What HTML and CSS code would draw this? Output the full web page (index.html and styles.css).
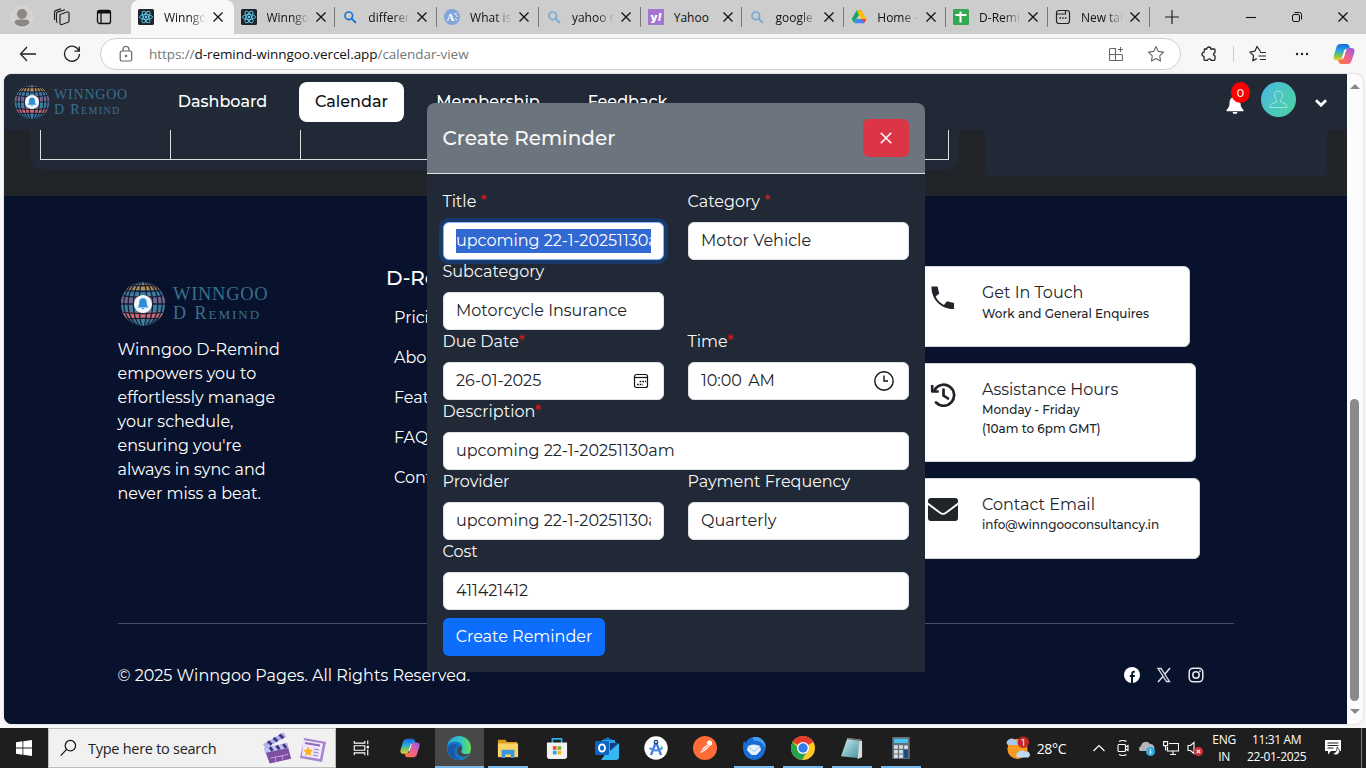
FILE: index.html
```html
<!DOCTYPE html>
<html lang="en">
<head>
<meta charset="utf-8">
<title>Winngoo D-Remind</title>
<link rel="stylesheet" href="styles.css">
</head>
<body>
<svg class="defs" width="0" height="0" aria-hidden="true">
  <defs>
    <linearGradient id="gCopA" x1="0" y1="0" x2="0" y2="1"><stop offset="0" stop-color="#1668d8"/><stop offset=".4" stop-color="#25a7e8"/><stop offset=".7" stop-color="#79c35a"/><stop offset="1" stop-color="#f4d12d"/></linearGradient>
    <linearGradient id="gCopB" x1="1" y1="0" x2="0" y2="1"><stop offset="0" stop-color="#8a5cf0"/><stop offset=".5" stop-color="#f0618f"/><stop offset="1" stop-color="#ff7a2e"/></linearGradient>
    <linearGradient id="gAv" x1="0" y1="0" x2="1" y2=".6"><stop offset="0" stop-color="#4bb8e0"/><stop offset="1" stop-color="#4bd0a8"/></linearGradient>
    <linearGradient id="gEdge" x1="0" y1="0" x2="1" y2="0"><stop offset="0" stop-color="#2aa5e0"/><stop offset=".6" stop-color="#32c7c0"/><stop offset="1" stop-color="#6be04e"/></linearGradient>
    <linearGradient id="gNote" x1="0" y1="0" x2="1" y2="1"><stop offset="0" stop-color="#d3eef2"/><stop offset="1" stop-color="#3e8f9e"/></linearGradient>
    <clipPath id="globeClip"><circle cx="24" cy="24" r="23"/></clipPath>
  </defs>
  <symbol id="x" viewBox="0 0 12 12"><path d="M1.500 1.500l9 9M10.500 1.500l-9 9" fill="none" stroke="currentColor" stroke-width="1.300"/></symbol>
  <symbol id="react" viewBox="0 0 16 16"><rect width="16" height="16" rx="1.500" fill="#20232a"/><g fill="none" stroke="#5ccfee" stroke-width=".9"><ellipse cx="8" cy="8" rx="6.500" ry="2.500"/><ellipse cx="8" cy="8" rx="6.500" ry="2.500" transform="rotate(60 8 8)"/><ellipse cx="8" cy="8" rx="6.500" ry="2.500" transform="rotate(120 8 8)"/></g><circle cx="8" cy="8" r="1.300" fill="#5ccfee"/></symbol>
  <symbol id="mag" viewBox="0 0 16 16"><circle cx="6.800" cy="6.800" r="3.800" fill="none" stroke="currentColor" stroke-width="1.700"/><path d="M9.600 9.600l3.700 3.700" stroke="currentColor" stroke-width="2" stroke-linecap="round"/></symbol>
  <symbol id="copilot" viewBox="0 0 24 24"><path d="M8.500 2h6c1.700 0 2.500 1 3 2.500l.6 2.200h-2.600c-2 0-3 1-3.600 3l-1.700 6c-.5 1.600-1.300 2.600-3 2.600H4.500C2 18.300 1 16.500 1.700 14L4.500 5C5.200 3 6.500 2 8.500 2z" fill="url(#gCopA)"/><path d="M15.500 22h-6c-1.700 0-2.500-1-3-2.500l-.5-1.800h2.500c2 0 3-1 3.600-3l1.700-6c.5-1.600 1.300-2.600 3-2.600h2.700c2.500 0 3.500 1.800 2.800 4.300l-2.800 8.600c-.7 2-2 3-4 3z" fill="url(#gCopB)"/><path d="M10.500 14.500l1.900-6c.3-.9.900-1.500 1.800-1.500l-2.200 7.500c-.3.900-.9 1.600-1.900 1.600z" fill="#fff"/></symbol>
  <symbol id="globe" viewBox="0 0 48 48">
    <g clip-path="url(#globeClip)">
      <rect width="48" height="48" fill="#417f9f"/><rect y="3" width="48" height="6.500" fill="#b98a4c"/><rect y="15.500" width="48" height="8.500" fill="#75678b"/><rect y="32" width="48" height="8" fill="#c96a6e"/>
      <g fill="none" stroke="#14203a" stroke-width="1.400">
        <path d="M0 3.500q24 3 48 0M0 9q24 4 48 0M0 15q24 4 48 0M0 24h48M0 32.500q24 3 48 0M0 40q24 -2 48 0"/>
        <ellipse cx="24" cy="24" rx="4" ry="24"/><ellipse cx="24" cy="24" rx="10" ry="24"/><ellipse cx="24" cy="24" rx="15.500" ry="24"/><ellipse cx="24" cy="24" rx="20" ry="24"/>
      </g>
    </g>
    <circle cx="24" cy="24" r="9.500" fill="#f4f4fb"/><path d="M24 18c-3 0-4 2.200-4 5 0 2.500-.7 3.500-1.700 4.600h11.400C28.700 26.500 28 25.500 28 23c0-2.800-1-5-4-5zM22.500 28.300h3c-.3 1.500-2.700 1.500-3 0z" fill="#2f8fd6"/>
  </symbol>
</svg>

<header class="tabstrip">
  <div class="left-tools">
    <svg class="profile" viewBox="0 0 22 22"><circle cx="11" cy="11" r="10.500" fill="#d4d1cd" stroke="#dedbd7"/><circle cx="11" cy="8" r="5" fill="#8b8987"/><path d="M3.500 17c0-2.500 2-3.500 4-3.500h7c2 0 4 1 4 3.500-2 2.400-4.500 3.600-7.500 3.600S5.500 19.400 3.500 17z" fill="#8b8987"/></svg>
    <svg class="ic18" viewBox="0 0 18 18" fill="none" stroke="#222" stroke-width="1.200" stroke-linejoin="round"><path d="M7 6.500l7-2.500q2-.5 2 1.500v7.500q0 1-1 1.300l-6 2.200q-2 .5-2-1.500zM4.500 14.500q-1 0-1-1.500V5.500q0-1 1-1.400L12 1.800M1.500 12V4q0-1 1-1.400L8 .9"/></svg>
    <svg class="ic18" viewBox="0 0 18 18" fill="none" stroke="#111" stroke-width="1.300"><rect x="2.500" y="2.500" width="13" height="13" rx="2"/><path d="M2.500 4h13" stroke-width="3"/><path d="M6 5v10"/></svg>
  </div>
  <div class="tabs">
    <div class="tab active"><svg class="fav"><use href="#react"/></svg><span class="tt">Winngoo</span><svg class="cl"><use href="#x"/></svg></div>
    <div class="tab"><svg class="fav"><use href="#react"/></svg><span class="tt">Winngoo</span><svg class="cl"><use href="#x"/></svg></div>
    <div class="tab"><svg class="fav blue"><use href="#mag"/></svg><span class="tt">different</span><svg class="cl"><use href="#x"/></svg></div>
    <div class="tab"><svg class="fav" viewBox="0 0 16 16"><circle cx="8" cy="8" r="8" fill="#81a5da"/><text x="2.500" y="12" class="fav-a">A</text><path d="M10.500 4l1 2M12 7h2M11 9.500l2 1.500M12.500 4l-1 1.500" stroke="#fff" stroke-width=".9"/></svg><span class="tt">What is a</span><svg class="cl"><use href="#x"/></svg></div>
    <div class="tab"><svg class="fav pale"><use href="#mag"/></svg><span class="tt">yahoo ma</span><svg class="cl"><use href="#x"/></svg></div>
    <div class="tab"><svg class="fav" viewBox="0 0 16 16"><rect width="16" height="16" fill="#a374d0"/><text x="2.500" y="11.500" class="fav-y">y<tspan font-style="italic">!</tspan></text></svg><span class="tt nofade">Yahoo</span><svg class="cl"><use href="#x"/></svg></div>
    <div class="tab"><svg class="fav pale"><use href="#mag"/></svg><span class="tt">google</span><svg class="cl"><use href="#x"/></svg></div>
    <div class="tab"><svg class="fav" viewBox="0 0 16 16"><path d="M5.500 1.500h5L8 5.800 3.200 14 .7 10z" fill="#1fa463"/><path d="M5.500 1.500h5l4.900 8.500h-5z" fill="#fbbc04"/><path d="M3.200 14.200L5.700 10h9.700L13 14.200z" fill="#4285f4"/><path d="M13 14.200l2.400-4.200h-4.800z" fill="#ea4335"/></svg><span class="tt">Home -</span><svg class="cl"><use href="#x"/></svg></div>
    <div class="tab"><svg class="fav" viewBox="0 0 16 16"><rect width="16" height="16" rx="1.500" fill="#34a853"/><path d="M7.500 2.500v11M2.500 6h11" stroke="#fff" stroke-width="2"/></svg><span class="tt">D-Remin</span><svg class="cl"><use href="#x"/></svg></div>
    <div class="tab"><svg class="fav" viewBox="0 0 16 16" fill="none" stroke="#222" stroke-width="1.200"><rect x="1.500" y="1.500" width="13" height="13" rx="2.500"/><path d="M1.500 5h9V2"/><path d="M4.500 9h7" stroke-width="1.500" stroke-dasharray="1.500 1.200"/></svg><span class="tt">New tab</span><svg class="cl"><use href="#x"/></svg></div>
  </div>
  <svg class="newtab" viewBox="0 0 14 14" stroke="#222" stroke-width="1.200"><path d="M7 0v14M0 7h14"/></svg>
  <div class="winbtns">
    <svg viewBox="0 0 12 12" stroke="#111" stroke-width="1.100"><path d="M1 6.500h10"/></svg>
    <svg viewBox="0 0 12 12" fill="none" stroke="#111"><rect x="1.500" y="3.500" width="7" height="7" rx="1.500"/><path d="M3.500 1.500h5q2 0 2 2v5"/></svg>
    <svg viewBox="0 0 12 12"><use href="#x"/></svg>
  </div>
</header>

<div class="toolbar">
  <svg class="back" viewBox="0 0 18 16" fill="none" stroke="#222" stroke-width="1.300"><path d="M17 8H1.500M8 1L1.500 8 8 15"/></svg>
  <svg class="reload" viewBox="0 0 18 18" fill="none" stroke="#222" stroke-width="1.300"><path d="M16 6A7.500 7.500 0 1 0 16.500 9M16.300 1.500V6.200H11.500"/></svg>
  <div class="address">
    <svg class="lock" viewBox="0 0 14 16" fill="none" stroke="#666" stroke-width="1.200"><rect x="1.200" y="5" width="11.500" height="10" rx="1.800"/><path d="M4 5V3.500a3 3 0 0 1 6 0V5"/><circle cx="7" cy="10" r=".6" fill="#666"/></svg>
    <span class="url"><i>https://</i>d-remind-winngoo.vercel.app<i>/calendar-view</i></span>
    <svg class="apps" viewBox="0 0 16 16" fill="none" stroke="#666" stroke-width="1.100"><path d="M7.500 14.500h-5a1 1 0 0 1-1-1v-10a1 1 0 0 1 1-1h5zM1.500 8.500h12a1 1 0 0 1 1 1v4a1 1 0 0 1-1 1h-6M12.500 1v5M10 3.500h5"/></svg>
    <svg class="star" viewBox="0 0 18 18" fill="none" stroke="#666" stroke-width="1.100" stroke-linejoin="round"><path d="M9 1.500l2.300 4.900 5.200.7-3.800 3.700.9 5.300L9 13.500l-4.600 2.600.9-5.300L1.500 7.100l5.200-.7z"/></svg>
  </div>
  <svg class="puzzle" viewBox="0 0 18 18" fill="none" stroke="#222" stroke-width="1.300" stroke-linejoin="round"><path d="M4.500 4h2.300a2 2 0 1 1 4 0H14q1 0 1 1v2.800a1.500 1.500 0 1 0 0 3V14q0 1.300-1 1.300h-2.800a1.900 1.900 0 0 0-3.700 0H5q-1 0-1-1v-3a2 2 0 1 1 0-4z"/></svg>
  <i class="vsep"></i>
  <svg class="favs" viewBox="0 0 18 18" fill="none" stroke="#222" stroke-width="1.200" stroke-linejoin="round"><path d="M11.500 6.500L8 1.500 5.900 6.200l-5 .8 3.700 3.600-.8 5.200 4-2.200M11 7.500h6M9.500 11h7.500M11 14.500h6"/></svg>
  <svg class="dots" viewBox="0 0 14 4" fill="#222"><circle cx="2" cy="2" r="1.200"/><circle cx="7" cy="2" r="1.200"/><circle cx="12" cy="2" r="1.200"/></svg>
  <svg class="cop"><use href="#copilot"/></svg>
</div>

<div class="viewport">
  <main class="page">
    <nav class="nav">
      <div class="logo small"><svg><use href="#globe"/></svg><div class="lt"><b>WINNGOO</b><b class="sc">D Remind</b></div></div>
      <a class="n1">Dashboard</a><a class="n2">Calendar</a><a class="n3">Membership</a><a class="n4">Feedback</a>
      <div class="nav-right">
        <div class="bell"><svg viewBox="0 0 18 18" fill="#fff"><path d="M9 0C5 1 3.500 4 3.500 7.500 3.500 11 2 12 .5 14v1.300h17V14C16 12 14.500 11 14.500 7.500 14.500 4 13 1 9 0zM6.500 16h5a2.500 2 0 0 1-5 0z"/></svg><span class="badge">0</span></div>
        <svg class="avatar" viewBox="0 0 35 35"><circle cx="17.500" cy="17.500" r="17.500" fill="url(#gAv)"/><path d="M17.500 9c-3 0-4.500 2.200-4 5 .3 2 1 3.200 2 4v2l-5 2c-1 .5-1.500 1.500-1.500 3.500h17c0-2-.5-3-1.500-3.500l-5-2v-2c1-.8 1.700-2 2-4 .5-2.800-1-5-4-5z" fill="none" stroke="#9be8df" stroke-width="1"/></svg>
        <svg class="chev" viewBox="0 0 12 8" fill="none" stroke="#fff" stroke-width="2.800"><path d="M1 1.200l5 5 5-5"/></svg>
      </div>
    </nav>
    <section class="cal">
      <div class="calcard"><div class="grid"><i></i><i></i><i></i><i></i><i></i><i></i><i></i></div></div>
      <div class="side"></div>
    </section>
    <footer class="footer">
      <div class="ftop">
        <div class="about">
          <div class="logo big"><svg><use href="#globe"/></svg><div class="lt"><b>WINNGOO</b><b class="sc">D Remind</b></div></div>
          <p>Winngoo D-Remind<br>empowers you to<br>effortlessly manage<br>your schedule,<br>ensuring you're<br>always in sync and<br>never miss a beat.</p>
        </div>
        <div class="links"><h5>D-Remind</h5><a>Pricing</a><a>About Us</a><a>Features</a><a>FAQ's</a><a>Contact Us</a></div>
        <div class="contacts">
          <div class="cc c1"><svg viewBox="0 0 24 24" fill="#212529"><path d="M.5.500h6.200l1.700 7.200-3.700 3.100c2 4 4.500 6.500 8.500 8.500l3.100-3.700 7.200 1.700v6.200C10 24 0 13 .5.500z" transform="scale(.98)"/></svg><div><h6>Get In Touch</h6><p>Work and General Enquires</p></div></div>
          <div class="cc c2"><svg viewBox="0 0 26 24" fill="none" stroke="#212529" stroke-width="2.700"><path d="M4.500 7A10.500 10.500 0 1 1 6 19.500" stroke-linecap="round"/><path d="M2.200 2v6.500h6.500" stroke-linejoin="round" stroke-width="2.600"/><path d="M13.500 6.500v6l4.500 3" stroke-linecap="round"/></svg><div><h6>Assistance Hours</h6><p>Monday - Friday<br>(10am to 6pm GMT)</p></div></div>
          <div class="cc c3"><svg viewBox="0 0 30 23" fill="#212529"><path d="M3 0h24a3 3 0 0 1 3 3v1.500L17.500 14a4 4 0 0 1-5 0L0 4.500V3a3 3 0 0 1 3-3z"/><path d="M0 7l11.500 8.500a6 6 0 0 0 7 0L30 7v13a3 3 0 0 1-3 3H3a3 3 0 0 1-3-3z"/></svg><div><h6>Contact Email</h6><p>info@winngooconsultancy.in</p></div></div>
        </div>
      </div>
      <div class="fbot">
        <span>© 2025 Winngoo Pages. All Rights Reserved.</span>
        <div class="social">
          <svg viewBox="0 0 16 16"><circle cx="8" cy="8" r="8" fill="#fff"/><path d="M8 16V8.800M5.800 9h5M8.200 10V6.500q0-2 2.600-1.700" fill="none" stroke="#09122c" stroke-width="1.900"/></svg>
          <svg viewBox="0 0 16 16" fill="none" stroke="#dfe2e8"><path d="M2 1.500h3l8.500 13h-3z" stroke-width="1.300"/><path d="M14 1L9 7M7 9.500L2 15" stroke-width="1.500"/></svg>
          <svg viewBox="0 0 16 16" fill="none" stroke="#e8e8ee" stroke-width="1.500"><rect x="1.200" y="1.200" width="13.600" height="13.600" rx="4"/><circle cx="8" cy="8" r="3.200"/><circle cx="12" cy="4.200" r=".3"/></svg>
        </div>
      </div>
    </footer>

    <div class="modal">
      <div class="mh"><h4>Create Reminder</h4><span class="mx"><svg><use href="#x"/></svg></span></div>
      <div class="mb">
        <div class="f"><label>Title <em>*</em></label><div class="in focus"><span class="sel">upcoming 22-1-20251130am</span></div></div>
        <div class="f"><label>Category <em>*</em></label><div class="in"><span>Motor Vehicle</span></div></div>
        <div class="f"><label>Subcategory</label><div class="in"><span>Motorcycle Insurance</span></div></div>
        <div class="f"></div>
        <div class="f"><label>Due Date<em>*</em></label><div class="in"><span>26-01-2025</span><svg class="icd" viewBox="0 0 16 16" fill="none" stroke="#111" stroke-width="1.200"><rect x="1.500" y="1.500" width="13" height="13" rx="2"/><path d="M1.500 4.500h13"/><path d="M6.600 8.500h6.500M4 11.500h6" stroke-width="1.700" stroke-dasharray="1.700 1"/></svg></div></div>
        <div class="f"><label>Time<em>*</em></label><div class="in"><span class="time">10:00 AM</span><svg class="ict" viewBox="0 0 20 20" fill="none" stroke="#111" stroke-width="1.400"><circle cx="10" cy="10" r="9.200"/><path d="M10 4.500V10h4"/></svg></div></div>
        <div class="f wide"><label>Description<em>*</em></label><div class="in"><span>upcoming 22-1-20251130am</span></div></div>
        <div class="f"><label>Provider</label><div class="in"><span>upcoming 22-1-20251130am</span></div></div>
        <div class="f"><label>Payment Frequency</label><div class="in"><span>Quarterly</span></div></div>
        <div class="f wide"><label>Cost</label><div class="in"><span>411421412</span></div></div>
        <div class="btn">Create Reminder</div>
      </div>
    </div>
  </main>
  <div class="scroll"><i class="up"></i><i class="thumb"></i><i class="down"></i></div>
</div>

<div class="taskbar">
  <div class="start"><svg viewBox="0 0 16 16" fill="#fff"><path d="M0 2.200l6.500-.9v6.300H0zM7.300 1.200L16 0v7.600H7.300zM0 8.400h6.500v6.300L0 13.800zM7.300 8.400H16V16l-8.700-1.200z"/></svg></div>
  <div class="search">
    <svg class="sm" viewBox="0 0 18 18" fill="none" stroke="#111" stroke-width="1.300"><circle cx="11" cy="6.500" r="5.500"/><path d="M7 10.500L.8 17"/></svg>
    <span>Type here to search</span>
    <svg class="clap" viewBox="0 0 32 34"><path d="M1 13L22 1l3 4.500L4 17z" fill="#a9b3ee"/><path d="M6 10l4 3.500M12 6.500l4 3.500M18 3l4 4" stroke="#46347c" stroke-width="3"/><path d="M2 17l24-5 4 16L8 33z" fill="#7d4ea4"/><path d="M2 17l24-5 1.300 5L4 22z" fill="#bac5f6"/><path d="M8 16l3 4M15 14.500l3 4M22 13l3 4" stroke="#46347c" stroke-width="3"/><path d="M9 27.500l18-4M14 27v4M21 25v4" stroke="#d7b9eb" stroke-width=".8"/></svg>
    <svg class="news" viewBox="0 0 28 26"><path d="M5 1l22 4-4 20-22-4z" fill="#a585cb"/><path d="M4 3l20 3.500-3 15.500-18-3z" fill="#efe7fa"/><path d="M6 6l15 2.500" stroke="#8e6cbc" stroke-width="1.800"/><path d="M15 12l5 1M14.500 15l5 1M14 18l5 1" stroke="#9479ba" stroke-width="1"/><path d="M9 9.500l1.500 3 3.500.5-2.500 2.500.6 3.500L9 17.300 6 19l.6-3.500L4 13l3.500-.5z" fill="#ffb31c"/></svg>
  </div>
  <div class="apps-row">
    <div><svg viewBox="0 0 24 24" class="a18" fill="none" stroke="#fff" stroke-width="1.500"><path d="M3 2.500v3h14v-3M3 21.500v-3h14v3M3 9h14v6H3zM21 2v5M21 14v8"/><path d="M21 9v3.500" stroke-width="3"/></svg></div>
    <div><svg><use href="#copilot"/></svg></div>
    <div class="on full"><svg viewBox="0 0 24 24"><circle cx="12" cy="12" r="12" fill="url(#gEdge)"/><path d="M0 12C0 7 5 5.500 9 5.800c5 .3 7 4 6.500 7-.3 1.200-1 1.700-1 2.700 0 2 3 2.800 5 2.500 1-.2 2.300-.7 2.700-.4C20.500 21 17 24 12 24 5 24 0 19 0 12z" fill="#1674c4"/><path d="M9 11c-3 3-2 11 5 13-8 .5-13-5-13.500-11C2 8 9 7.500 11 9z" fill="#1a58a5"/><path d="M12.500 10c2 .6 2.800 2.500 1.600 4.600-.7 1.600.8 3.300 4.400 3.600 2 .1 3-.4 4-.8-2 2.800-6 3.800-9 2.600-4-1.600-5-7-1-10z" fill="#454545"/></svg></div>
    <div class="on"><svg viewBox="0 0 24 24"><path d="M1 3h8l2 2.500h11V21H1z" fill="#d99a18"/><path d="M1 7h22v15H1z" fill="#fbd367"/><path d="M5 14h14v9h-4v-4H9v4H5z" fill="#3b97dc"/></svg></div>
    <div><svg viewBox="0 0 24 24"><path d="M7 7V2h10v5" fill="none" stroke="#28b1e6" stroke-width="1.800"/><path d="M1 6h22v15a3 3 0 0 1-3 3H4a3 3 0 0 1-3-3z" fill="#f2f2f2"/><path d="M7.500 10h4v4h-4z" fill="#e8502b"/><path d="M12.500 10h4v4h-4z" fill="#7cb829"/><path d="M7.500 15h4v4h-4z" fill="#22a5ea"/><path d="M12.500 15h4v4h-4z" fill="#f8b818"/></svg></div>
    <div><svg viewBox="0 0 24 24" class="a24"><path d="M4 6l9-5 9 6v4H4z" fill="#1a64bb"/><path d="M7 4h13v14H7z" fill="#28a8ea"/><path d="M15 12l9-5v14a3 3 0 0 1-3 3H6z" fill="#35b8f1"/><path d="M24 7l-9 8v-8z" fill="#123f82"/><rect y="5" width="14" height="14" rx="1" fill="#0c65c3"/><ellipse cx="7" cy="12" rx="3" ry="3.600" fill="none" stroke="#fff" stroke-width="1.900"/></svg></div>
    <div><svg viewBox="0 0 24 24" class="a24"><circle cx="12" cy="12" r="11.700" fill="#fff"/><path d="M12 6L7 19M12 6l5 13" stroke="#4079dc" stroke-width="2.200"/><path d="M5.500 12q6.500 5 13 0" fill="none" stroke="#4b86e8" stroke-width="2"/><circle cx="12" cy="6" r="1.700" fill="#fff" stroke="#174179" stroke-width="1.300"/><path d="M16.500 9l2.500 2.500-2 1.500" fill="#3ddc84"/></svg></div>
    <div><svg viewBox="0 0 24 24" class="a24"><circle cx="12" cy="12" r="12" fill="#ff6c37"/><path d="M6 19l4-7 5-4 2 1.800-5 5-5 2.500" fill="#fff"/><circle cx="16.500" cy="7" r="2.600" fill="#fff"/><path d="M9 15l7-6" stroke="#ff6c37" stroke-width=".8"/></svg></div>
    <div class="on"><svg viewBox="0 0 24 24" class="a24"><path d="M2 5l2 2C5 3 9 1 13 1c6 0 10 4 11 8 0 8-4 14-11 15C5 24 1 18 1 12c0-3 0-5 1-7z" fill="#196dd4"/><path d="M10 2c6-3 14 2 13 10-2-5-6-8-12-7 2-1 1-2-1-3z" fill="#4aa0ef"/><path d="M6 10q6-3 12 0l1 4-4 4.500q-3 1-6 0L5 14z" fill="#e7f4fe"/><path d="M6 10.500l6 5 6-5" fill="none" stroke="#91bee7"/></svg></div>
    <div class="on"><svg viewBox="0 0 24 24" class="a24"><circle cx="12" cy="12" r="12" fill="#ffca28"/><path d="M12 12L1.600 6A12 12 0 0 1 22.400 6z" fill="#e33b2e"/><path d="M1.600 6A12 12 0 0 0 11 24l6-10-9-1z" fill="#25a351"/><circle cx="12" cy="12" r="6" fill="#fff"/><circle cx="12" cy="12" r="4.700" fill="#327be9"/></svg></div>
    <div class="on"><svg viewBox="0 0 24 24"><path d="M7 1l15 2-4 20-18-2z" fill="url(#gNote)"/><path d="M20 4h3v18l-5 2z" fill="#dadada"/><path d="M7 1l15 2-.3 1.500L6.500 2.500z" fill="#777"/></svg></div>
    <div class="on"><svg viewBox="0 0 24 24"><rect x="2.500" y="0" width="19" height="24" fill="#667078"/><rect x="4.500" y="2" width="15" height="4.500" fill="#46c5f3"/><path d="M4.500 11h10M4.500 16h10M4.500 21h10" stroke="#dce2e7" stroke-width="3.800" stroke-dasharray="4 1.500"/><path d="M15.500 9.200h4v3.800h-4z" fill="#dce2e7"/><path d="M15.500 14h4v9h-4z" fill="#12488b"/></svg></div>
  </div>
  <div class="weather"><svg viewBox="0 0 26 24"><circle cx="13" cy="13" r="10.500" fill="#f79a21"/><path d="M3 9a3 3 0 0 1 0-5 5 5 0 0 1 8 0 3 3 0 0 1 2 5z" fill="#a8c8f1"/><path d="M13 22a3 3 0 0 1 0-5 5 5 0 0 1 8-1 3 3 0 0 1 3 6z" fill="#bed8f6"/><circle cx="19" cy="6" r="6" fill="#c62828"/><text x="17" y="9.500" class="wb">1</text></svg><span>28°C</span></div>
  <div class="tray">
    <svg viewBox="0 0 16 16" fill="none" stroke="#fff" stroke-width="1.200"><path d="M2.500 11L8 5.500l5.500 5.500"/></svg>
    <svg viewBox="0 0 16 16" fill="none" stroke="#fff" stroke-width="1.100"><rect x="3" y="4.500" width="7.500" height="7" rx="1"/><path d="M10.500 7l2.500-1.500v5L10.500 9M4 1.500q4-2 7.500 0M4 14.500q4 2 7.500 0"/></svg>
    <svg viewBox="0 0 16 16"><path d="M1 11a3 3 0 0 1 1-5 5 5 0 0 1 9-2 4 4 0 0 1 3 7z" fill="#b5b5b5"/><circle cx="11.500" cy="11.500" r="4.500" fill="#2dabe2"/><path d="M11.500 9v1M11.500 10.800v3" stroke="#fff" stroke-width="1.300"/></svg>
    <svg viewBox="0 0 16 16" fill="none" stroke="#fff" stroke-width="1.100"><path d="M6 3.500h9.500v7.500h-11V7M7 14.500h6M10 11v3.500M.6 1.600h4v4h-4zM2.600 5.600v5"/></svg>
    <svg viewBox="0 0 16 16" fill="none" stroke="#fff" stroke-width="1.100"><path d="M1 5.500h2.500L7 2.500v11l-3.500-3H1z"/><circle cx="11.500" cy="11.500" r="4.500" fill="#d32f3a" stroke="none"/><path d="M9.800 9.800l3.400 3.400M13.200 9.800l-3.400 3.400"/></svg>
  </div>
  <div class="lang">ENG<br>IN</div>
  <div class="clock">11:31 AM<br>22-01-2025</div>
  <div class="notif"><svg viewBox="0 0 16 17"><path d="M0 0h16v11H11l-5 0-3 3.500V11H0z" fill="#fff"/><path d="M2.500 3h11M2.500 5.500h11M2.500 8h6" stroke="#1e1e1e"/><path d="M12 7q4 3 2 6.500-3 3-6.500 0 5-1 4.500-6.500z" fill="#fff" stroke="#1e1e1e" stroke-width=".8"/></svg></div>
</div>
</body>
</html>
```

FILE: styles.css
```css
* { box-sizing: border-box; }
body { margin: 0; width: 1366px; height: 768px; overflow: hidden; display: flex; flex-direction: column; background: #f7f7f7; font-family: Montserrat, Inter, sans-serif; font-size: 16px; }
.defs { position: absolute; }
svg { display: block; flex: none; }
h4, h5, h6, p { margin: 0; font-weight: 400; }

/* tab strip */
.tabstrip { height: 34px; flex: none; background: #cdcdcd; display: flex; align-items: center; font: 12px "Segoe UI", "Open Sans", sans-serif; color: #111; }
.left-tools { width: 131px; padding-left: 11px; display: flex; align-items: center; }
.profile { width: 22px; height: 22px; margin-right: 20px; }
.ic18 { width: 18px; height: 18px; margin-right: 24px; }
.tabs { display: flex; height: 34px; }
.tab { width: 101.800px; height: 34px; padding-left: 7px; display: flex; align-items: center; background: linear-gradient(#777, #777) right center / 1px 20px no-repeat; }
.tab.active { background: #f7f7f7; border-radius: 8px 8px 0 0; width: 102.500px; }
.fav { width: 16px; height: 16px; margin-right: 10px; }
.fav.blue { color: #1976d2; }
.fav.pale { color: #78a9d6; }
.fav-a { font: 700 11px "Liberation Serif", serif; fill: #fff; }
.fav-y { font: 900 11px Inter, sans-serif; fill: #fff; }
.tt { width: 42px; overflow: hidden; white-space: nowrap; margin-right: 6px; -webkit-mask-image: linear-gradient(90deg, #000 60%, transparent 100%); mask-image: linear-gradient(90deg, #000 60%, transparent 100%); }
.tt.nofade { -webkit-mask-image: none; mask-image: none; }
.cl { width: 12px; height: 12px; }
.newtab { width: 14px; height: 14px; margin-left: 15px; }
.winbtns { margin-left: auto; display: flex; gap: 34px; padding-right: 17px; }
.winbtns svg { width: 12px; height: 12px; }

/* toolbar */
.toolbar { height: 40px; flex: none; display: flex; align-items: center; padding-left: 19px; }
.back { width: 18px; height: 16px; margin-right: 26px; }
.reload { width: 18px; height: 18px; margin-right: 19px; }
.address { width: 1081px; height: 32px; background: #fff; border: 1px solid #d0d0d4; border-radius: 16px; display: flex; align-items: center; padding-left: 18px; }
.lock { width: 14px; height: 16px; }
.url { font: 13.500px "Segoe UI", "Open Sans", sans-serif; margin-left: 16px; color: #111; letter-spacing: -.07px; white-space: nowrap; }
.url i { font-style: normal; color: #767676; }
.apps { width: 16px; height: 16px; margin-left: auto; margin-right: 23px; }
.star { width: 18px; height: 18px; margin-right: 15px; }
.puzzle { width: 18px; height: 18px; margin-left: 19px; }
.vsep { width: 1px; height: 16px; background: #ccc; margin: 0 15px; }
.favs { width: 18px; height: 18px; }
.dots { width: 16px; height: 4px; margin: 0 22px 0 27px; }
.cop { width: 24px; height: 24px; }

/* viewport */
.viewport { margin-left: 4px; width: 1359px; height: 650px; flex: none; display: flex; border-radius: 8px; overflow: hidden; background: #fcfcfc; box-shadow: 0 0 2px #bbb; }
.page { width: 1343px; height: 650px; position: relative; overflow: hidden; background: #212529; }
.nav { height: 56px; background: #212936; display: flex; align-items: center; padding-left: 10px; color: #fff; font-weight: 500; }
.nav a { height: 40px; display: flex; align-items: center; justify-content: center; margin-right: 16px; padding-bottom: 2px; }
.n1 { width: 121px; }
.n2 { width: 105px; background: #fff; color: #111; border-radius: 8px; }
.n3 { width: 136px; }
.n4 { width: 111px; }
.logo { display: flex; align-items: center; }
.lt { display: flex; flex-direction: column; font-family: "Liberation Serif", serif; color: #39708f; }
.lt b { font-weight: 400; white-space: nowrap; }
.sc { font-variant: small-caps; }
.small { width: 148px; }
.small svg { width: 36px; height: 36px; margin-right: 4px; }
.small b { font-size: 14px; line-height: 15px; letter-spacing: .8px; }
.small .sc { font-size: 14px; letter-spacing: 1.350px; }
.big svg { width: 46px; height: 46px; margin-right: 7px; }
.big b { font-size: 18.500px; line-height: 19px; letter-spacing: .7px; }
.big .sc { font-size: 18px; letter-spacing: 2px; }
.nav-right { margin-left: auto; display: flex; align-items: center; padding-right: 20px; }
.bell { position: relative; width: 18px; height: 20px; margin-right: 17px; padding-top: 4px; }
.bell svg { width: 18px; height: 18px; }
.badge { position: absolute; left: 5px; top: -10px; width: 19px; height: 21px; border-radius: 50%; background: #f00; color: #fff; font-size: 11px; font-weight: 500; display: flex; align-items: center; justify-content: center; }
.avatar { width: 35px; height: 35px; margin-bottom: 5px; margin-right: 19px; }
.chev { width: 12px; height: 8px; margin-top: 1px; }
.cal { height: 66px; display: flex; }
.calcard { width: 929px; height: 40px; margin-left: 26px; padding: 0 10px 0 10px; background: #212936; border-radius: 0 0 14px 14px; }
.grid { display: flex; height: 30px; border-left: 1px solid #ddd; border-bottom: 1px solid #ddd; }
.grid i { flex: none; width: 130px; border-right: 1px solid #ddd; }
.grid i:last-child { flex: 1; }
.side { width: 342px; height: 46px; margin-left: 26px; background: #212936; border-radius: 0 0 5px 5px; }

/* footer */
.footer { height: 528px; background: #09122c; color: #fff; padding: 70px 113px 0 114px; }
.ftop { display: flex; height: 358px; border-bottom: 1px solid #465069; }
.about { width: 268px; padding: 15px 0 0 2px; }
.about p { margin: 11px 0 0 -2.500px; line-height: 24px; }
.links { width: 400px; }
.links h5 { font-size: 20px; font-weight: 500; line-height: 24px; margin-bottom: 16px; }
.links a { display: block; line-height: 24px; margin: 0 0 16px 8px; }
.contacts { display: flex; flex-direction: column; gap: 16px; margin-left: 86px; color: #212529; }
.cc { background: #fff; border: 1px solid #d3d5da; border-radius: 6px; display: flex; padding: 16px 0 0 52px; height: 81px; }
.cc > svg { margin-top: 3px; }
.cc h6 { font-size: 16px; line-height: 20px; }
.cc p { font-size: 12px; line-height: 19px; white-space: nowrap; font-weight: 500; }
.c1 { width: 318px; }
.c1 svg { width: 24px; height: 24px; margin-left: 6px; margin-right: 27px; }
.c1 p { margin-top: 1px; }
.c2 { width: 324px; height: 99px; }
.c2 svg { width: 26px; height: 24px; margin-left: 5px; margin-right: 26px; }
.c3 { width: 328px; }
.c3 svg { width: 30px; height: 23px; margin-left: 3px; margin-right: 24px; }
.fbot { display: flex; justify-content: space-between; align-items: center; height: 103px; padding-right: 30px; margin-left: -.5px; }
.social { display: flex; gap: 16px; padding-bottom: 1px; }
.social svg { width: 16px; height: 16px; }

/* dialog over the page */
.modal { position: absolute; left: 423px; top: 29px; width: 498px; height: 569px; background: #212936; border-radius: 8px 8px 0 0; color: #f8f8f8; }
.mh { height: 71px; background: #6c757d; border-bottom: 1px solid #e2e4e6; border-radius: 8px 8px 0 0; display: flex; align-items: center; justify-content: space-between; padding: 0 16px 0 15.500px; }
.mh h4 { font-size: 20px; font-weight: 500; }
.mx { width: 46px; height: 38px; background: #dc3545; border-radius: 6px; display: flex; align-items: center; justify-content: center; color: #fff; }
.mx svg { width: 14px; height: 14px; }
.mb { padding: 16px; display: grid; grid-template-columns: 221px 221px; column-gap: 24px; grid-auto-rows: 70px; }
.wide { grid-column: span 2; }
.f label { display: block; line-height: 24px; height: 32px; white-space: nowrap; margin-left: -.5px; }
.f em { font-style: normal; color: #f01414; }
.in { height: 38px; background: #fff; border: 1px solid #dee2e6; border-radius: 6px; padding: 0 12px; color: #212529; display: flex; align-items: center; }
.in span { overflow: hidden; white-space: nowrap; line-height: 24px; flex: 1; }
.in .time { word-spacing: 2px; }
.in .sel { background: #3268d2; color: #fff; }
.focus { border-color: #86b7fe; box-shadow: 0 0 0 4px #1b3a6c; }
.icd { width: 16px; height: 16px; margin-right: 2px; }
.ict { width: 20px; height: 20px; margin-right: 2px; }
.btn { width: 162px; height: 38px; margin-top: 8px; padding-bottom: 1px; background: #0d6efd; border-radius: 6px; color: #fff; display: flex; align-items: center; justify-content: center; white-space: nowrap; }

.scroll { width: 15px; display: flex; flex-direction: column; align-items: center; }
.up { border: 5px solid transparent; border-top: 0; border-bottom: 5px solid #888; margin-top: 10px; }
.thumb { width: 9px; height: 302px; border-radius: 5px; background: #8a8a8a; margin-top: 310px; }
.down { border: 5px solid transparent; border-bottom: 0; border-top: 5px solid #888; margin-top: 8px; }

/* taskbar */
.taskbar { margin-top: 4px; height: 40px; flex: none; background: #1e1e1e; display: flex; color: #fff; font: 12px "Segoe UI", "Open Sans", sans-serif; }
.start { width: 48px; display: flex; align-items: center; justify-content: center; }
.start svg { width: 16px; height: 16px; }
.search { width: 288px; background: #f1f1f1; border: 1px solid #bcbcbc; color: #222; display: flex; align-items: center; padding-left: 11px; font-size: 14.500px; }
.search span { margin-left: 11px; width: 174px; letter-spacing: -.27px; white-space: nowrap; }
.sm { width: 17px; height: 18px; }
.clap { width: 31px; height: 34px; }
.news { width: 28px; height: 26px; margin-left: 6px; margin-top: 4px; }
.apps-row { display: flex; padding-left: .5px; }
.apps-row div { width: 49.100px; display: flex; align-items: center; justify-content: center; }
.apps-row svg { width: 22px; height: 24px; }
.apps-row .a18 { width: 18px; height: 18px; }
.apps-row .a24 { width: 24px; }
.on { background: linear-gradient(#76b9ed, #76b9ed) center bottom / 40px 2px no-repeat; }
.apps-row .full { background-color: #484848; background-size: 49px 2px; }
.apps-row .full svg { width: 24px; }
.weather { display: flex; align-items: center; gap: 7px; margin-left: 79px; font-size: 14px; width: 86px; letter-spacing: -.3px; }
.weather svg { width: 25px; height: 24px; }
.wb { font: 9px Inter, sans-serif; fill: #fff; }
.tray { display: flex; align-items: center; gap: 8px; }
.tray svg { width: 16px; height: 16px; }
.lang { width: 43px; text-align: center; line-height: 17px; padding-top: 3px; letter-spacing: -.3px; }
.clock { width: 62px; text-align: center; line-height: 17px; padding-top: 3px; letter-spacing: -.35px; white-space: nowrap; }
.notif { margin-left: 17px; display: flex; align-items: center; width: 37px; height: 40px; border-right: 1px solid #777; }
.notif svg { width: 16px; height: 17px; }
```
